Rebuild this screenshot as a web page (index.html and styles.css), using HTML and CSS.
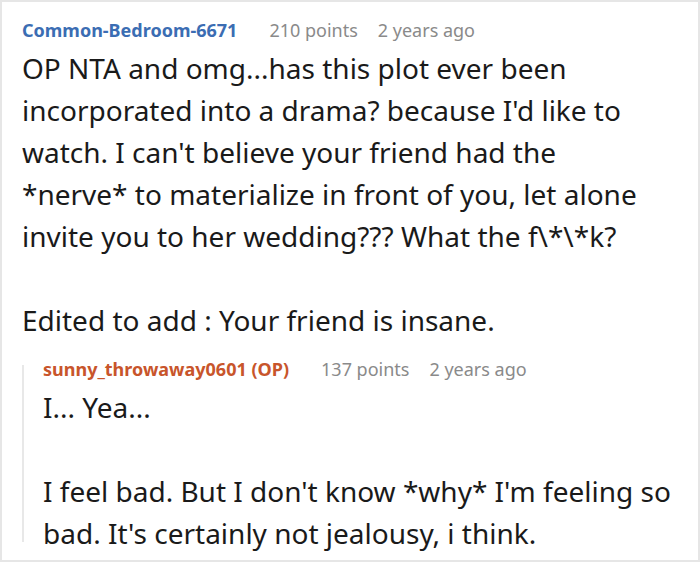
FILE: index.html
```html
<!DOCTYPE html>
<html lang="en">
<head>
<meta charset="utf-8">
<title>Comment</title>
<link rel="stylesheet" href="styles.css">
</head>
<body>
<div class="frame">
  <article class="comment">
    <header class="meta">
      <span class="author">Common-Bedroom-6671</span>
      <span class="points">210 points</span>
      <span class="age">2 years ago</span>
    </header>
    <div class="body main-body">
      <p>OP NTA and omg...has this plot ever been incorporated into a drama? because I'd like to watch. I can't believe your friend had the *nerve* to materialize in front of you, let alone invite you to her wedding??? What the f\*\*k?</p>
      <p>Edited to add : Your friend is insane.</p>
    </div>
    <article class="comment reply">
      <header class="meta">
        <span class="author op">sunny_throwaway0601 (OP)</span>
        <span class="points">137 points</span>
        <span class="age">2 years ago</span>
      </header>
      <div class="body">
        <p>I... Yea...</p>
        <p>I feel bad. But I don't know *why* I'm feeling so bad. It's certainly not jealousy, i think.</p>
      </div>
    </article>
  </article>
</div>
</body>
</html>
```

FILE: styles.css
```css
html, body {
  margin: 0;
  padding: 0;
  background: #ffffff;
}
body {
  width: 700px;
  height: 562px;
  overflow: hidden;
  font-family: "Noto Sans", "Open Sans", "DejaVu Sans", sans-serif;
  color: #1a1a1a;
}
.frame {
  box-sizing: border-box;
  width: 700px;
  height: 562px;
  border: 2px solid #e6e6e6;
  padding: 16px 20px 0 20px;
  overflow: hidden;
}
.meta {
  display: flex;
  align-items: baseline;
  font-size: 18px;
  line-height: 24px;
  white-space: nowrap;
}
.author {
  font-weight: 700;
  color: #3b6db3;
  margin-right: 32px;
}
.author.op {
  color: #c8552b;
}
.points {
  color: #8a8a8a;
  margin-right: 20px;
}
.age {
  color: #8a8a8a;
}
.body {
  margin-top: 5px;
  font-size: 28px;
  line-height: 42px;
  color: #1a1a1a;
}
.main-body {
  padding-right: 31px;
}
.body p {
  margin: 0 0 42px 0;
}
.body p:last-child {
  margin-bottom: 0;
}
.reply {
  position: relative;
  margin-top: 16px;
  padding-left: 21px;
}
.reply::before {
  content: "";
  position: absolute;
  left: 0;
  top: 8px;
  height: 177px;
  width: 2px;
  background: #e8e8e8;
}
```
